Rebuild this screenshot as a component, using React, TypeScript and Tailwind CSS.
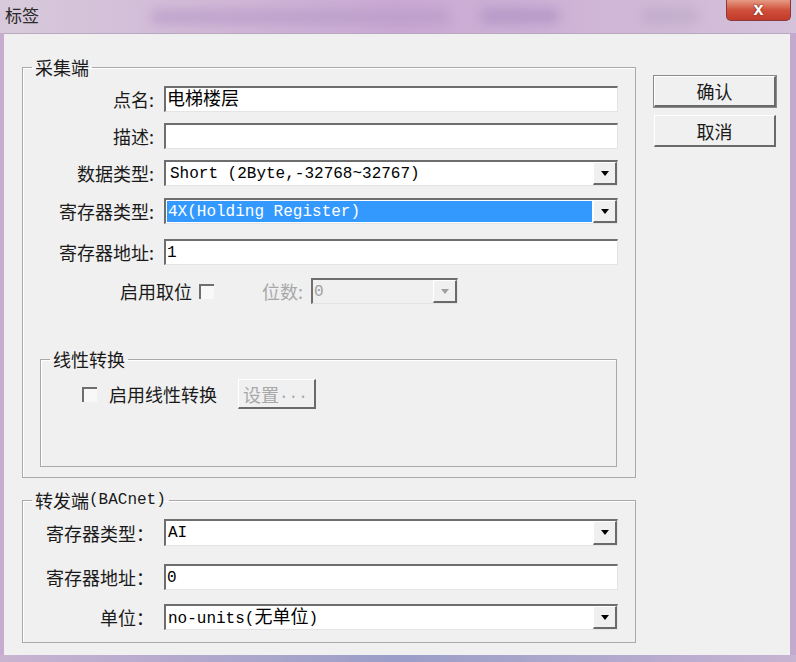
import React from 'react'

const cjk = { fontFamily: '"Noto Sans CJK SC", "Noto Sans", sans-serif' }
const mono = { fontFamily: '"Liberation Mono", "Noto Sans CJK SC", monospace' }

const sunken =
  'border-t-2 border-l-2 border-t-[#6e6e6e] border-l-[#6e6e6e] border-b border-r border-b-[#e4e4e4] border-r-[#e4e4e4]'
const raised =
  'border-t border-l border-t-[#ffffff] border-l-[#ffffff] border-b-2 border-r-2 border-b-[#6a6a6a] border-r-[#6a6a6a]'

function Arrow({ disabled }: { disabled?: boolean }) {
  return (
    <svg width="8" height="5" viewBox="0 0 8 5">
      <path d="M0 0h8L4 5z" fill={disabled ? '#a0a0a0' : '#000'} />
    </svg>
  )
}

function TextBox({ value, className = '' }: { value: React.ReactNode; className?: string }) {
  return (
    <div className={`${sunken} h-[26px] bg-white flex items-center pl-[1px] text-[16px] text-black leading-none ${className}`} style={mono}>
      {value}
    </div>
  )
}

function Combo({
  value,
  selected,
  disabled,
  className = '',
}: {
  value: React.ReactNode
  selected?: boolean
  disabled?: boolean
  className?: string
}) {
  return (
    <div className={`${sunken} h-[26px] flex ${disabled ? 'bg-[#f0f0f0]' : 'bg-white'} ${className}`}>
      <div className="flex-1 flex items-center p-[1px]">
        <div
          className={`h-full w-full flex items-center text-[16px] leading-none ${
            selected ? 'bg-[#3399ff] text-white' : disabled ? 'text-[#a0a0a0]' : 'text-black'
          }`}
          style={mono}
        >
          {value}
        </div>
      </div>
      <div className={`${raised} w-[24px] bg-[#f0f0f0] flex items-center justify-center`}>
        <Arrow disabled={disabled} />
      </div>
    </div>
  )
}

function Check() {
  return <div className="w-[15px] h-[15px] border-t-2 border-l-2 border-[#6e6e6e] bg-[#f8f8f8] shrink-0" />
}

function Row({ label, labelW, children, mt }: { label: string; labelW: string; children: React.ReactNode; mt: string }) {
  return (
    <div className={`flex items-center ${mt}`}>
      <div className={`${labelW} text-right text-[18px] text-[#1a1a1a] leading-none shrink-0`}>{label}</div>
      {children}
    </div>
  )
}

export default function App() {
  return (
    <div className="w-[796px] h-[662px] bg-[#c6adcf] flex flex-col overflow-hidden" style={cjk}>
      {/* title bar */}
      <div className="h-[33px] relative bg-gradient-to-r from-[#d8cadb] via-[#caa9d3] to-[#d4c1da] shrink-0">
        <div className="absolute left-[150px] top-[10px] w-[300px] h-[14px] rounded-full bg-[#b79ac8] blur-[6px] opacity-70" />
        <div className="absolute left-[480px] top-[8px] w-[80px] h-[16px] rounded-full bg-[#a88cc0] blur-[6px] opacity-60" />
        <div className="absolute left-[640px] top-[8px] w-[60px] h-[16px] rounded-full bg-[#b9a6c6] blur-[6px] opacity-60" />
        <div className="absolute left-[5px] top-[4px] text-[17px] text-[#2a2a2a] leading-[22px]">标签</div>
        <div className="absolute left-[726px] top-0 w-[65px] h-[21px] rounded-b-[5px] border border-[#8a3a3a] border-t-0 bg-gradient-to-b from-[#e59a84] via-[#d0503c] to-[#c23a2a] flex items-center justify-center">
          <span className="text-white font-bold text-[18px] leading-none -mt-[2px]" style={{ fontFamily: '"Liberation Sans", sans-serif', textShadow: '0 0 2px #5a1a10' }}>
            x
          </span>
        </div>
      </div>

      <div className="flex h-[622px] shrink-0">
        <div className="w-[4px] shrink-0" />
        <div className="w-[786px] bg-[#f0f0f0] border-t border-[#b8a8c0] flex">
          {/* left column */}
          <div className="pl-[18px] pt-[23px] w-[632px] shrink-0 flex flex-col">
            <fieldset className="border border-[#a9a9a9] h-[421px] w-[614px] shadow-[inset_1px_1px_0_#ffffff]">
              <legend className="ml-[9px] px-[3px] text-[18px] leading-[20px] text-[#1a1a1a]">采集端</legend>
              <Row label="点名:" labelW="w-[131px]" mt="mt-[9px]">
                <TextBox value={<span className="text-[18px]">电梯楼层</span>} className="ml-[10px] w-[454px]" />
              </Row>
              <Row label="描述:" labelW="w-[131px]" mt="mt-[11px]">
                <TextBox value="" className="ml-[10px] w-[454px]" />
              </Row>
              <Row label="数据类型:" labelW="w-[131px]" mt="mt-[11px]">
                <Combo value={<span className="pl-[3px]">Short (2Byte,-32768~32767)</span>} className="ml-[10px] w-[454px]" />
              </Row>
              <Row label="寄存器类型:" labelW="w-[131px]" mt="mt-[12px]">
                <Combo value={<span className="pl-[1px]">4X(Holding Register)</span>} selected className="ml-[10px] w-[454px]" />
              </Row>
              <Row label="寄存器地址:" labelW="w-[131px]" mt="mt-[15px]">
                <TextBox value="1" className="ml-[10px] w-[454px]" />
              </Row>
              <div className="flex items-center mt-[13px] pl-[97px]">
                <span className="text-[18px] leading-none text-[#1a1a1a]">启用取位</span>
                <div className="ml-[7px]">
                  <Check />
                </div>
                <span className="ml-[48px] text-[18px] leading-none text-[#a8a8a8]">位数:</span>
                <Combo value="0" disabled className="ml-[8px] w-[147px]" />
              </div>
              <fieldset className="mt-[45px] ml-[17px] w-[577px] h-[118px] border border-[#a9a9a9] shadow-[inset_1px_1px_0_#ffffff]">
                <legend className="ml-[9px] px-[3px] text-[18px] leading-[20px] text-[#1a1a1a]">线性转换</legend>
                <div className="flex items-center mt-[10px] pl-[41px]">
                  <Check />
                  <span className="ml-[12px] text-[18px] leading-none text-[#1a1a1a]">启用线性转换</span>
                  <div className={`${raised} ml-[21px] w-[78px] h-[30px] flex items-center pl-[4px] text-[18px] leading-none text-[#a8a8a8]`}>
                    设置<span style={mono} className="text-[16px]">...</span>
                  </div>
                </div>
              </fieldset>
            </fieldset>

            <fieldset className="mt-[12px] border border-[#a9a9a9] h-[153px] w-[614px] shadow-[inset_1px_1px_0_#ffffff]">
              <legend className="ml-[9px] px-[3px] h-[20px] flex items-center text-[18px] leading-none text-[#1a1a1a]">
                转发端<span style={mono} className="text-[16px] leading-none">(BACnet)</span>
              </legend>
              <Row label="寄存器类型：" labelW="w-[131px]" mt="mt-[9px]">
                <Combo value={<span className="pl-[1px]">AI</span>} className="ml-[10px] w-[454px] !h-[27px]" />
              </Row>
              <Row label="寄存器地址：" labelW="w-[131px]" mt="mt-[18px]">
                <TextBox value="0" className="ml-[10px] w-[454px]" />
              </Row>
              <Row label="单位：" labelW="w-[131px]" mt="mt-[14px]">
                <Combo
                  value={
                    <span className="pl-[1px]">
                      no-units(<span className="text-[18px]">无单位</span>)
                    </span>
                  }
                  className="ml-[10px] w-[454px]"
                />
              </Row>
            </fieldset>
          </div>

          {/* right column */}
          <div className="ml-[18px] pt-[42px] flex flex-col gap-[8px]">
            <button className={`${raised} w-[122px] h-[31px] bg-[#f0f0f0] text-[18px] leading-none text-[#1a1a1a] border-l-[#e8e8e8] border-t-[#e8e8e8] outline outline-1 outline-[#8a8a8a]`}>
              确认
            </button>
            <button className={`${raised} w-[122px] h-[32px] bg-[#f0f0f0] text-[18px] leading-none text-[#1a1a1a]`}>取消</button>
          </div>
        </div>
        <div className="w-[6px] shrink-0 bg-[#c3a9cd]" />
      </div>
      <div className="flex-1 bg-gradient-to-r from-[#c9b3d1] via-[#9a9ec8] to-[#c7b3d2]" />
    </div>
  )
}
